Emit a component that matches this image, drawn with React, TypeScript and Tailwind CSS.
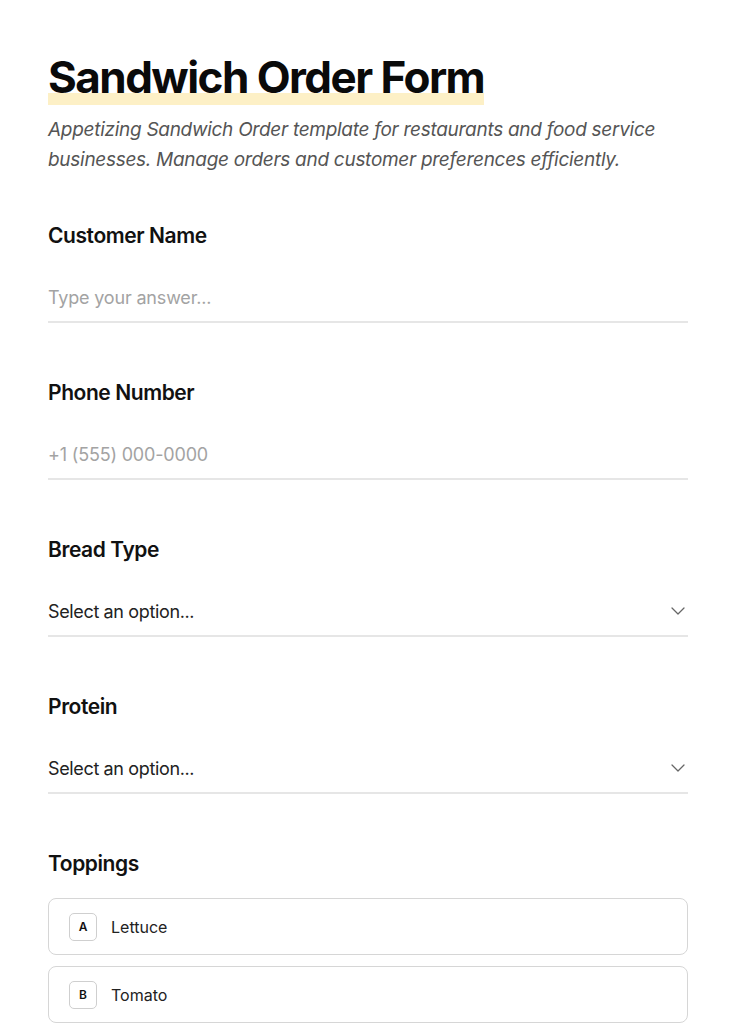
import { ChevronDown } from 'lucide-react';

const font = { fontFamily: 'Inter, "Noto Sans", sans-serif' };

function FieldLabel({ children }: { children: string }) {
  return <h2 className="text-[21px] leading-[28px] font-semibold tracking-[-0.02em] text-[#111]">{children}</h2>;
}

function TextField({ label, placeholder }: { label: string; placeholder: string }) {
  return (
    <div className="mb-14">
      <FieldLabel>{label}</FieldLabel>
      <input
        className="mt-[23px] block h-[50px] w-full border-b-2 border-[#e6e6e6] bg-transparent text-[18px] tracking-[-0.01em] text-[#222] outline-none placeholder:text-[#a3a3a3]"
        placeholder={placeholder}
      />
    </div>
  );
}

function SelectField({ label }: { label: string }) {
  return (
    <div className="mb-14">
      <FieldLabel>{label}</FieldLabel>
      <div className="mt-[23px] flex h-[50px] items-center justify-between border-b-2 border-[#e6e6e6]">
        <span className="text-[18px] tracking-[-0.02em] text-[#222]">Select an option...</span>
        <ChevronDown className="-mr-[2px] h-6 w-6 text-[#666]" strokeWidth={1.25} />
      </div>
    </div>
  );
}

const toppings = ['Lettuce', 'Tomato'];

export default function App() {
  return (
    <div className="min-h-screen bg-white" style={font}>
      <div className="mx-12 pt-[49px] pb-4">
        <h1 className="inline-block text-[44px] leading-[56px] font-bold tracking-[-0.035em] text-[#0a0a0a] shadow-[inset_0_-12px_0_#fdf0c6]">
          Sandwich Order Form
        </h1>
        <p className="mt-[10px] text-[19px] leading-[30px] italic tracking-[-0.015em] text-[#555]">
          Appetizing Sandwich Order template for restaurants and food service businesses. Manage orders and customer preferences efficiently.
        </p>

        <div className="mt-[47px]">
          <TextField label="Customer Name" placeholder="Type your answer..." />
          <TextField label="Phone Number" placeholder="+1 (555) 000-0000" />
          <SelectField label="Bread Type" />
          <SelectField label="Protein" />

          <FieldLabel>Toppings</FieldLabel>
          <div className="mt-[20px] flex flex-col gap-[11px]">
            {toppings.map((t, i) => (
              <div key={t} className="flex h-[57px] items-center rounded-lg border border-[#d6d6d6] px-5">
                <span className="flex h-7 w-7 items-center justify-center rounded-[5px] border border-[#cfcfcf] text-[12px] font-semibold text-[#111]">
                  {String.fromCharCode(65 + i)}
                </span>
                <span className="ml-[14px] text-[16px] text-[#222]">{t}</span>
              </div>
            ))}
          </div>
        </div>
      </div>
    </div>
  );
}
